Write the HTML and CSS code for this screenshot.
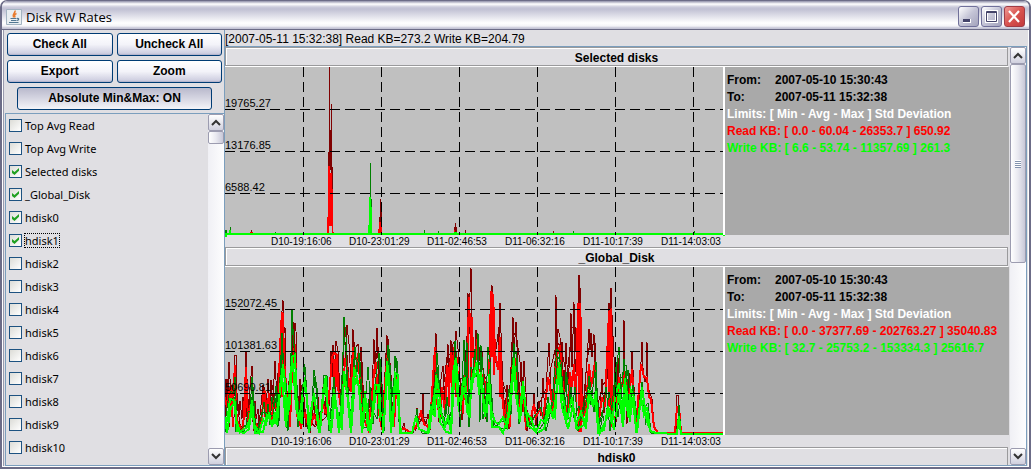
FILE: index.html
```html
<!DOCTYPE html>
<html lang="en">
<head>
<meta charset="utf-8">
<title>Disk RW Rates</title>
<link rel="stylesheet" href="styles.css">
</head>
<body>
<div class="window">
  <header class="titlebar">
    <svg class="app-icon" width="16" height="16" viewBox="0 0 16 16" aria-hidden="true">
      <rect width="16" height="16" rx="1" fill="#a3b4c2"/><rect x="1" y="1" width="14" height="14" fill="#e9eef1"/>
      <path d="M9 1.500C10 4 5.500 5 7.500 8.500M10.500 4.500C8 5.500 8.500 6.500 9 8.500" fill="none" stroke="#e8792b" stroke-width="1.500"/>
      <path d="M4.500 9.500h6M5 11.500h5.500M3 13.500h9.500M11 9.500c2.500-.5 2 1.500 0 2" fill="none" stroke="#527792" stroke-width="1.200"/>
    </svg>
    <h1 class="title">Disk RW Rates</h1>
    <div class="window-controls">
      <button class="wbtn" aria-label="Minimize"><svg width="19" height="19"><rect x="4" y="12" width="8" height="4" fill="#fff"/><rect x="4" y="12" width="7" height="3" fill="#44446a"/></svg></button>
      <button class="wbtn" aria-label="Maximize"><svg width="19" height="19"><path d="M4.500 4.500h10v10h-10z" fill="none" stroke="#fff" stroke-width="3"/><path d="M4.500 4.500h10v10h-10zM4 5.500h11" fill="none" stroke="#44446a"/></svg></button>
      <button class="wbtn wbtn-close" aria-label="Close"><svg width="19" height="19"><path d="M4 4l10 11M14 4L4 15" fill="none" stroke="#fff" stroke-width="2.200"/></svg></button>
    </div>
  </header>
  <div class="content">
    <aside class="sidebar">
      <div class="actions">
        <button class="btn">Check All</button>
        <button class="btn">Uncheck All</button>
        <button class="btn">Export</button>
        <button class="btn">Zoom</button>
        <button class="btn btn-toggle" aria-pressed="true">Absolute Min&amp;Max: ON</button>
      </div>
      <div class="list-pane">
        <div class="disk-list">
          <label class="disk"><input type="checkbox"><span>Top Avg Read</span></label>
          <label class="disk"><input type="checkbox"><span>Top Avg Write</span></label>
          <label class="disk"><input type="checkbox" checked><span>Selected disks</span></label>
          <label class="disk"><input type="checkbox" checked><span>_Global_Disk</span></label>
          <label class="disk"><input type="checkbox" checked><span>hdisk0</span></label>
          <label class="disk"><input type="checkbox" checked><span class="focused">hdisk1</span></label>
          <label class="disk"><input type="checkbox"><span>hdisk2</span></label>
          <label class="disk"><input type="checkbox"><span>hdisk3</span></label>
          <label class="disk"><input type="checkbox"><span>hdisk4</span></label>
          <label class="disk"><input type="checkbox"><span>hdisk5</span></label>
          <label class="disk"><input type="checkbox"><span>hdisk6</span></label>
          <label class="disk"><input type="checkbox"><span>hdisk7</span></label>
          <label class="disk"><input type="checkbox"><span>hdisk8</span></label>
          <label class="disk"><input type="checkbox"><span>hdisk9</span></label>
          <label class="disk"><input type="checkbox"><span>hdisk10</span></label>
        </div>
        <div class="scrollbar">
          <button class="arrow" aria-label="Scroll up"><svg width="10" height="7"><path d="M1 6l4-4 4 4" fill="none" stroke="#333" stroke-width="2"/></svg></button>
          <div class="thumb thumb-small"></div>
          <button class="arrow arrow-down" aria-label="Scroll down"><svg width="10" height="7"><path d="M1 1l4 4 4-4" fill="none" stroke="#333" stroke-width="2"/></svg></button>
        </div>
      </div>
    </aside>
    <main class="main">
      <p class="status">[2007-05-11 15:32:38] Read KB=273.2 Write KB=204.79</p>
      <div class="charts-pane">
        <div class="charts">
          <section class="panel">
            <h2 class="panel-title">Selected disks</h2>
            <div class="panel-body">
              <svg class="chart" width="500" height="180" viewBox="0 0 500 180">
                <rect width="498" height="168" fill="#c0c0c0"/>
                <g fill="#800000" shape-rendering="crispEdges">
                  <rect x="104" y="0" width="1" height="100"/><rect x="106" y="37" width="1" height="70"/><rect x="103" y="85" width="1" height="20"/><rect x="105" y="63" width="1" height="40"/><rect x="107" y="100" width="1" height="25"/>
                  <rect x="155" y="132" width="1" height="25"/><rect x="154" y="150" width="1" height="10"/><rect x="156" y="140" width="1" height="18"/><rect x="230" y="156" width="1" height="10"/><rect x="229" y="160" width="1" height="6"/><rect x="231" y="160" width="1" height="6"/><rect x="26" y="163" width="1" height="3"/><rect x="240" y="163" width="1" height="3"/><rect x="328" y="164" width="1" height="2"/>
                </g>
                <g fill="#f00" shape-rendering="crispEdges">
                  <path d="M102 167v-17h1v-51h2v7h2v16h1v43h1v2h-2v-8h-3v8zM153 167v-5h1v-7h3v12zM25 167v-2h3v2zM229 167v-4h1v4z"/>
                </g>
                <g fill="#008000" shape-rendering="crispEdges">
                  <rect x="145" y="96" width="1" height="36"/><rect x="146" y="132" width="1" height="9"/><rect x="5" y="160" width="1" height="6"/><rect x="0" y="163" width="2" height="4"/><rect x="50" y="165" width="1" height="1"/><rect x="199" y="163" width="1" height="3"/><rect x="213" y="164" width="1" height="2"/><rect x="348" y="164" width="1" height="2"/><rect x="469" y="164" width="1" height="2"/>
                </g>
                <path d="M0 166h143v-8h1v-28h2v10h1v26h351v-1h2v4h-2v-1H2v2H0zM4 166v-3h2v3zM229 166v-1h3v1z" fill="#0f0" shape-rendering="crispEdges"/>
                <path class="grid" d="M0 42.500H498M0 84.500H498M0 126.500H498M78.500 0V168M156.500 0V168M234.500 0V168M312.500 0V168M390.500 0V168M468.500 0V168"/>
                <g class="axis-y">
                  <text x="0" y="40">19765.27</text><text x="0" y="82">13176.85</text><text x="0" y="124">6588.42</text>
                </g>
                <g class="axis-x">
                  <text x="46" y="178">D10-19:16:06</text><text x="124" y="178">D10-23:01:29</text><text x="202" y="178">D11-02:46:53</text><text x="280" y="178">D11-06:32:16</text><text x="358" y="178">D11-10:17:39</text><text x="436" y="178">D11-14:03:03</text>
                </g>
              </svg>
              <div class="info">
                <dl class="range"><dt>From:</dt><dd>2007-05-10 15:30:43</dd><dt>To:</dt><dd>2007-05-11 15:32:38</dd></dl>
                <p class="limits">Limits: [ Min - Avg - Max ] Std Deviation</p>
                <p class="read">Read KB: [ 0.0 - 60.04 - 26353.7 ] 650.92</p>
                <p class="write">Write KB: [ 6.6 - 53.74 - 11357.69 ] 261.3</p>
              </div>
            </div>
          </section>
          <section class="panel">
            <h2 class="panel-title">_Global_Disk</h2>
            <div class="panel-body">
              <svg class="chart" width="500" height="180" viewBox="0 0 500 180">
                <rect width="498" height="168" fill="#c0c0c0"/>
                <g class="series">
                  <polyline class="read-max" points="0,112 1,140 2,112 3,132 4,95 6,128 7,118 9,130 10,88 11,88 12,126 14,148 15,134 17,152 18,130 20,145 21,85 22,112 24,150 25,120 27,99 29,145 30,134 31,152 33,142 34,158 36,138 38,118 40,142 42,126 43,112 45,146 46,113 48,140 49,112 50,94 52,132 53,106 54,130 55,103 57,44 58,33 59,66 60,60 61,112 63,140 64,114 65,152 67,90 68,54 69,100 70,56 71,64 72,120 74,144 75,112 77,155 79,130 81,160 83,152 85,166 89,135 91,158 93,130 95,160 98,120 100,148 102,112 104,140 106,84 107,110 108,78 110,108 111,74 113,84 114,118 116,145 118,100 119,58 121,94 122,58 124,77 126,115 128,62 129,96 131,80 133,77 134,104 136,80 137,95 139,140 142,158 144,132 146,150 149,72 150,108 152,61 154,120 156,105 158,160 160,105 162,68 163,105 165,100 167,153 170,100 172,94 174,155 176,164 179,156 181,165 185,166 188,166 190,155 192,141 194,157 197,152 198,127 199,152 201,157 203,147 205,163 207,132 209,128 211,66 212,125 214,155 216,112 218,99 220,138 221,116 223,77 224,110 226,73 227,110 228,77 229,75 230,100 231,64 233,82 235,112 237,153 239,115 241,135 243,26 244,68 245,26 246,1 247,54 249,102 251,63 253,95 254,80 256,108 257,84 259,118 261,152 263,115 265,95 267,18 268,55 269,46 271,96 273,95 275,36 276,66 278,120 280,145 282,118 284,162 286,100 288,50 289,85 291,55 293,105 294,135 296,95 298,145 299,94 301,125 302,164 305,148 307,157 309,127 311,158 314,134 316,149 318,111 320,150 322,105 324,76 326,122 328,145 330,94 331,28 332,110 333,62 335,70 336,112 337,75 339,130 341,76 343,118 345,85 346,46 347,100 349,35 350,105 352,80 354,8 355,36 356,102 359,144 361,105 364,62 365,83 366,66 367,90 369,67 371,145 373,162 375,140 377,112 378,128 379,146 381,105 383,110 384,36 385,48 386,21 387,52 389,90 391,155 393,90 394,138 396,120 398,110 399,53 400,105 402,157 404,105 405,145 407,85 409,120 412,162 414,135 417,75 418,101 420,115 421,110 422,75 423,120 427,132 429,158 432,166 451,166 452,128 453,128 455,160 457,166 498,166"/>
                  <polyline class="read-max" points="0,150 2,122 4,160 6,136 8,160 11,130 16,164 21,140 23,160 26,135 29,164 36,150 40,125 42,150 48,118 52,152 57,80 60,110 63,150 69,80 72,140 76,118 81,148 90,160 101,150 107,96 110,130 113,90 117,154 121,75 125,124 129,75 132,98 136,92 139,150 145,145 148,110 153,80 157,150 163,72 167,120"/>
                  <polyline class="read-max" points="190,164 197,150 206,150 210,100 216,140 222,90 227,85 231,110 239,112 244,40 247,110 253,75 260,112 265,105 268,30 270,90 274,60 277,112 284,135 288,68 291,66 297,110 305,162 312,142 322,120 326,100 332,75 336,80 342,110 347,60 350,60 352,110 355,20 358,140 362,95 365,74 368,78 370,75 372,140 378,118 382,112 385,40 387,48 390,110 399,110 402,140 406,108"/>
                  <polyline class="read" points="0,130 2,140 4,124 7,145 10,98 11,143 13,157 18,163 20,125 21,100 23,154 25,140 28,130 30,155 34,163 37,150 39,120 42,145 44,126 46,158 49,133 51,140 53,147 55,80 57,45 58,48 59,92 62,130 65,160 67,102 70,77 72,148 76,160 80,145 84,163 89,148 94,160 98,137 101,147 104,130 107,90 109,86 112,88 113,120 115,135 118,130 120,91 123,108 126,125 128,80 130,110 133,86 135,110 138,150 143,162 147,130 149,105 151,95 153,140 157,163 160,115 163,83 165,140 169,160 172,105 175,164 179,161 186,166 191,160 196,145 199,157 203,160 206,143 210,80 212,135 215,151 217,120 220,145 222,98 224,127 226,85 228,130 229,83 231,130 232,90 234,142 238,145 240,100 242,125 244,30 245,60 247,50 248,88 250,100 252,72 253,101 256,106 260,115 262,131 264,115 266,24 268,28 270,86 273,103 275,70 277,126 280,158 282,130 285,160 287,105 289,85 291,110 295,145 297,120 301,160 306,150 309,137 311,150 315,142 318,150 321,130 323,110 325,120 328,145 331,90 333,86 335,78 337,110 342,150 345,105 347,120 349,97 351,135 353,37 355,37 357,155 361,140 364,97 366,120 370,95 373,160 377,130 380,140 382,90 384,45 386,43 388,150 391,150 394,110 397,120 400,104 403,140 407,102 411,160 416,97 419,110 422,111 424,130 426,132 429,160 433,166 450,166 452,140 454,139 456,166 498,166"/>
                  <path class="read" d="M3 128L6 120L8 160M20 150V110M40 150V124M57 130L58 55M109 125V92M111 120V92M123 122L127 108M133 100L137 118M224 140V100M227 130V88M229 110V80M243 115V50M246 115V60M267 90V30M269 108V40M275 130V72M332 125V92M346 130V112M354 165V36M356 165V50M384 140V52M386 160V52"/>
                  <polyline class="write-max" points="0,158 2,140 4,128 6,124 8,126 10,110 12,154 14,164 18,160 21,158 23,145 25,144 27,110 29,158 33,165 36,150 39,135 41,155 43,137 45,158 47,130 49,140 51,119 53,160 55,110 57,66 59,104 61,115 62,161 64,145 66,94 67,43 69,79 71,116 73,160 76,138 78,155 79,97 81,116 83,162 87,136 89,103 92,121 94,162 97,135 99,108 102,109 104,164 107,130 109,110 111,139 113,160 116,145 118,85 119,50 121,70 122,120 124,140 126,160 129,92 130,80 132,105 134,86 136,136 139,160 142,160 145,120 148,157 151,110 154,86 156,120 159,160 161,105 163,78 165,112 168,160 170,89 172,94 174,155 176,166 188,165 192,142 194,160 197,166 203,166 206,137 209,144 212,86 213,98 215,127 218,155 221,137 223,157 226,145 228,130 230,74 232,96 234,118 236,137 239,73 241,120 242,75 244,145 246,100 248,104 250,82 252,110 253,66 255,155 256,78 258,152 261,139 263,80 265,95 267,153 271,160 275,154 280,155 284,122 286,148 289,76 290,112 292,90 294,157 298,115 300,149 304,155 308,160 311,158 315,162 319,155 323,130 326,147 329,110 332,82 334,85 337,120 339,145 341,105 343,152 346,120 349,151 354,139 357,152 362,131 364,109 366,138 371,94 373,165 377,145 380,158 384,125 388,150 391,105 394,80 396,132 399,92 401,115 403,103 406,130 408,118 411,165 417,115 420,140 423,136 426,166 452,166 454,138 456,166 498,166"/>
                  <polyline class="write-max" points="0,165 5,135 9,130 11,165 19,164 25,150 28,120 31,166 38,145 45,150 48,148 52,125 54,155 57,85 60,110 63,164 67,60 70,85 74,150 80,100 85,164 90,110 95,164 100,112 105,164 109,120 114,164 119,70 121,85 125,155 130,90 135,95 139,155 143,100 146,140 152,152 156,92 159,164 164,82 167,130 171,92 175,164"/>
                  <polyline class="write-max" points="204,160 212,100 216,148 219,160 222,130 226,164 229,100 231,90 235,160 240,95 244,160 249,90 253,100 257,90 262,155 265,102 269,160 282,162 288,90 291,85 294,145 299,130 302,160 316,140 321,164 328,135 333,90 336,95 340,150 342,110 347,145 350,120 353,164 359,135 365,115 369,145 371,105 375,166 381,120 385,164 391,95 393,150 399,100 401,98 405,155 409,125 413,160 417,120 421,158"/>
                  <polyline class="write" points="0,162 3,148 5,132 9,133 11,152 15,165 22,160 25,151 27,133 29,157 34,166 38,152 41,157 44,145 47,160 50,145 52,158 55,120 58,97 60,116 62,150 65,135 67,90 70,88 72,144 77,157 79,110 82,133 84,166 88,130 92,144 95,166 98,125 101,109 103,150 106,166 109,122 112,143 117,163 119,104 121,117 124,138 126,162 129,100 132,110 135,126 137,166 140,124 143,164 147,150 150,118 153,118 155,150 159,160 162,94 164,110 166,155 168,160 170,106 173,108 175,166 187,166 191,149 194,162 203,166 206,139 210,150 211,108 214,125 216,145 220,159 223,150 226,165 228,105 231,91 233,120 235,142 238,115 240,110 242,145 245,151 246,115 249,105 252,95 254,128 256,105 259,137 262,143 264,107 266,143 270,155 274,157 278,150 282,160 286,135 289,91 292,135 295,145 298,114 301,145 306,151 309,161 312,163 316,153 320,155 324,136 328,152 331,130 334,95 337,125 342,153 347,130 351,158 356,145 361,162 364,123 368,140 371,124 373,166 379,163 383,139 387,157 390,131 394,116 397,149 400,111 403,150 406,123 409,130 411,166 416,130 419,148 422,140 425,164 431,166 452,167 454,149 456,167 500,167"/>
                  <polyline class="write" points="0,150 2,166 6,140 10,136 12,164 19,166 24,162 27,140 30,166 38,165 42,148 46,154 50,156 54,132 57,108 61,160 66,100 68,98 71,140 74,154 78,125 81,122 84,154 89,126 94,166 100,116 106,166 110,128 114,166 119,112 122,125 126,166 130,112 134,120 137,166 141,132 145,166 151,126 154,120 158,166 163,100 166,166 171,112 176,166"/>
                  <polyline class="write" points="204,166 207,145 211,118 215,155 221,165 226,166 230,98 234,145 239,120 243,148 248,112 252,105 256,112 260,150 264,115 267,160 274,160 278,166 283,150 288,102 291,128 295,155 298,120 303,158 312,166 319,162 325,142 330,150 333,105 337,140 343,162 348,138 352,162 359,158 365,130 370,135 375,166 380,155 385,145 389,163 394,125 398,160 401,120 405,155 407,130 412,166 417,120 422,155 427,166"/>
                </g>
                <path class="grid" d="M0 42.500H498M0 84.500H498M0 126.500H498M78.500 0V168M156.500 0V168M234.500 0V168M312.500 0V168M390.500 0V168M468.500 0V168"/>
                <g class="axis-y">
                  <text x="0" y="40">152072.45</text><text x="0" y="82">101381.63</text><text x="0" y="124">50690.81</text>
                </g>
                <g class="axis-x">
                  <text x="46" y="178">D10-19:16:06</text><text x="124" y="178">D10-23:01:29</text><text x="202" y="178">D11-02:46:53</text><text x="280" y="178">D11-06:32:16</text><text x="358" y="178">D11-10:17:39</text><text x="436" y="178">D11-14:03:03</text>
                </g>
              </svg>
              <div class="info">
                <dl class="range"><dt>From:</dt><dd>2007-05-10 15:30:43</dd><dt>To:</dt><dd>2007-05-11 15:32:38</dd></dl>
                <p class="limits">Limits: [ Min - Avg - Max ] Std Deviation</p>
                <p class="read">Read KB: [ 0.0 - 37377.69 - 202763.27 ] 35040.83</p>
                <p class="write">Write KB: [ 32.7 - 25753.2 - 153334.3 ] 25616.7</p>
              </div>
            </div>
          </section>
          <section class="panel">
            <h2 class="panel-title">hdisk0</h2>
          </section>
        </div>
        <div class="scrollbar">
          <button class="arrow" aria-label="Scroll up"><svg width="10" height="7"><path d="M1 6l4-4 4 4" fill="none" stroke="#333" stroke-width="2"/></svg></button>
          <div class="thumb thumb-large"><span class="grip"></span></div>
          <button class="arrow arrow-down" aria-label="Scroll down"><svg width="10" height="7"><path d="M1 1l4 4 4-4" fill="none" stroke="#333" stroke-width="2"/></svg></button>
        </div>
      </div>
    </main>
  </div>
</div>
</body>
</html>
```
FILE: styles.css
```css
* { box-sizing: border-box; margin: 0; padding: 0; }

body {
  height: 100vh;
  overflow: hidden;
  background: #fff;
  color: #000;
  font: 12px/15px "Liberation Sans", Arial, sans-serif;
}

button { border: 0; color: inherit; font: inherit; }
svg { display: block; }

.window {
  display: flex;
  flex-direction: column;
  height: 100%;
  border: 2px solid #6c6c87;
  border-top-width: 1px;
  border-radius: 7px 7px 0 0;
  background: #e0dfe3;
}

.titlebar {
  display: flex;
  flex: none;
  align-items: center;
  gap: 4px;
  height: 29px;
  padding: 3px 4px 0;
  border-radius: 6px 6px 0 0;
  border-bottom: 1px solid #6c6c87;
  background: linear-gradient(#8f8fa9 0, #fff 3px, #cbcbdb 6px, #c0c0d3 8px, #fff 22px, #f4f4f8 25px, #c5c5d6 27px);
}

.title { font: 13px/18px "Open Sans", "Noto Sans", sans-serif; }

.window-controls { display: flex; gap: 2px; margin-left: auto; }

.wbtn {
  width: 21px;
  height: 21px;
  border: 1px solid #70709a;
  border-radius: 3px;
  background: linear-gradient(135deg, #fff, #c4c4d6 50%, #a3a3bc);
}

.wbtn-close { border-color: #a03c46; background: linear-gradient(135deg, #ef9a96, #d9534f 50%, #c23a3c); }

.content {
  display: flex;
  flex: 1;
  min-height: 0;
  padding-right: 1px;
  border: 1px solid #fff;
  border-top: 0;
}

.sidebar {
  display: flex;
  flex: none;
  flex-direction: column;
  width: 222px;
  padding-left: 1px;
  border-left: 1px solid #9a9aae;
  border-right: 1px solid #7b9ebd;
}

.actions {
  display: grid;
  grid-template-columns: 1fr 1fr;
  gap: 4px;
  padding: 3px 2px;
}

.btn {
  height: 23px;
  border: 1px solid #003c74;
  border-radius: 3px;
  background: linear-gradient(#fff, #f3f3f9 50%, #c8c8dc);
  box-shadow: inset 0 -1px 1px #b4b4cb;
  font-weight: bold;
}

.btn-toggle {
  grid-column: 1 / -1;
  margin: 0 10px;
  background: linear-gradient(#b9b9cc, #d6d6e2 50%, #f4f4f8);
  box-shadow: none;
}

.list-pane {
  display: flex;
  flex: 1;
  min-height: 0;
  border: 1px solid #7b9ebd;
  border-right: 0;
}

.disk-list { flex: 1; overflow: hidden; }

.disk {
  display: flex;
  align-items: center;
  gap: 2px;
  height: 23px;
  padding-left: 3px;
  font: 11px/15px "Noto Sans", "DejaVu Sans", sans-serif;
}

.disk span { padding: 0 1px; }
.focused { outline: 1px dotted #000; outline-offset: -1px; }

.disk input {
  display: grid;
  place-items: center;
  width: 13px;
  height: 13px;
  border: 1px solid #1d5281;
  appearance: none;
  background: linear-gradient(135deg, #dcdcd7, #fff);
}

.disk input:checked::before {
  width: 7px;
  height: 7px;
  background: #21a121;
  clip-path: polygon(0 28%, 36% 58%, 100% 0, 100% 40%, 36% 100%, 0 70%);
  content: "";
}

.scrollbar {
  display: flex;
  flex: none;
  flex-direction: column;
  width: 16px;
  background: linear-gradient(90deg, #f0f0f5, #fdfdfe);
}

.arrow {
  display: grid;
  place-items: center;
  flex: none;
  height: 17px;
  border: 1px solid #9c9cb0;
  border-radius: 2px;
  background: linear-gradient(#fff, #d0d0de);
}

.arrow-down { margin-top: auto; }

.thumb {
  display: grid;
  place-items: center;
  border: 1px solid #9c9cb0;
  border-radius: 2px;
  background: linear-gradient(90deg, #fff, #e9e9f0 50%, #c8c8d8);
}

.thumb-small { height: 13px; }
.thumb-large { height: 199px; }
.grip { width: 6px; height: 8px; background: repeating-linear-gradient(#fff 0 1px, #8494ae 1px 2px); }

.main { display: flex; flex: 1; flex-direction: column; min-width: 0; }
.status { flex: none; height: 16px; line-height: 18px; white-space: nowrap; }

.charts-pane {
  display: flex;
  flex: 1;
  min-height: 0;
  border: 1px solid #7b9ebd;
  border-left: 0;
}

.charts { flex: 1; min-width: 0; margin-right: 1px; overflow: hidden; }

.panel-title {
  height: 19px;
  margin: 0 1px 1px 0;
  padding-top: 4px;
  border: 1px solid #9a9a9c;
  box-shadow: inset 1px 1px #fff, 0 1px #fff;
  font: bold 12px/12px "Liberation Sans", Arial, sans-serif;
  text-align: center;
}

.panel-body { display: flex; align-items: flex-start; }
.chart { flex: none; }

.series { fill: none; shape-rendering: crispEdges; }
.series .read-max { stroke: #800000; stroke-width: 1; }
.series .read { stroke: #f00; stroke-width: 2; }
.series .write-max { stroke: #008000; stroke-width: 1; }
.series .write { stroke: #0f0; stroke-width: 2; }
.grid { fill: none; stroke: #000; stroke-dasharray: 10 5; }
.axis-y { font: 11px "Liberation Sans", Arial, sans-serif; }
.axis-x { font: 10px "Liberation Sans", Arial, sans-serif; }

.info {
  flex: 1;
  min-width: 0;
  height: 168px;
  padding: 5px 2px;
  background: #a9a9a9;
  box-shadow: -2px 0 #fff;
  font-weight: bold;
  line-height: 17px;
  white-space: nowrap;
}

.range { display: grid; grid-template-columns: 48px 1fr; }
.limits { color: #fff; }
.info .read { color: #f00; }
.info .write { color: #0f0; }
```
